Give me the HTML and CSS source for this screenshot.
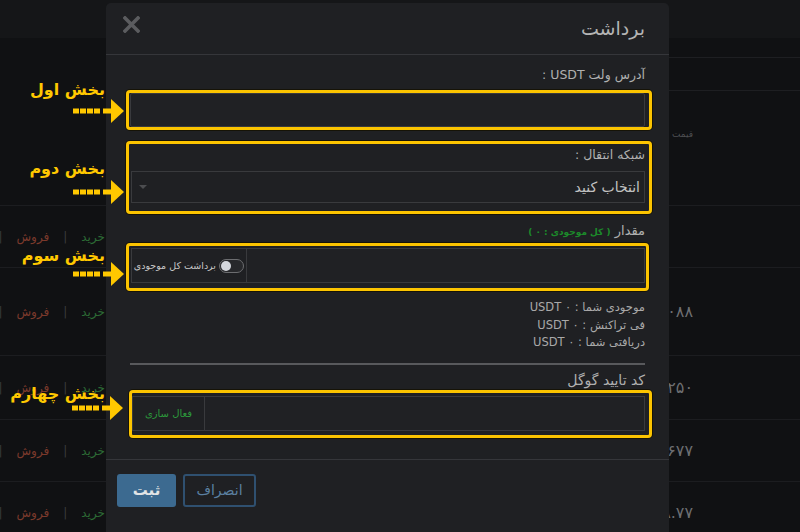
FILE: index.html
```html
<!DOCTYPE html>
<html lang="fa">
<head>
<meta charset="utf-8">
<title>برداشت</title>
<link rel="stylesheet" href="styles.css">
</head>
<body>
<div class="page">
  <div class="topbar"></div>
  <div class="upper">
    <div class="upper-right">
      <div class="ur-gap"></div>
      <div class="ur-row"></div>
      <div class="ur-row ur-tall"><span class="price-label">قیمت ·</span></div>
    </div>
  </div>
  <div class="row r1">
    <div class="trade"><span class="buy">خرید</span><span class="sep">|</span><span class="sell">فروش</span><span class="sep">|</span></div>
    <div></div>
    <div class="num"></div>
  </div>
  <div class="row r2">
    <div class="trade"><span class="buy">خرید</span><span class="sep">|</span><span class="sell">فروش</span><span class="sep">|</span></div>
    <div></div>
    <div class="num">۱۳,۰۸۸</div>
  </div>
  <div class="row r3">
    <div class="trade"><span class="buy">خرید</span><span class="sep">|</span><span class="sell">فروش</span><span class="sep">|</span></div>
    <div></div>
    <div class="num">۱۲,۲۵۰</div>
  </div>
  <div class="row r4">
    <div class="trade"><span class="buy">خرید</span><span class="sep">|</span><span class="sell">فروش</span><span class="sep">|</span></div>
    <div></div>
    <div class="num">۴,۶۷۷</div>
  </div>
  <div class="row r5">
    <div class="trade"><span class="buy">خرید</span><span class="sep">|</span><span class="sell">فروش</span><span class="sep">|</span></div>
    <div></div>
    <div class="num">۱۸.۷۷</div>
  </div>
</div>

<div class="modal" dir="rtl">
  <div class="modal-header">
    <h2 class="modal-title">برداشت</h2>
    <button class="close" aria-label="close">
      <svg width="17" height="17" viewBox="0 0 17 17"><path d="M2 2L15 15M15 2L2 15" stroke="#5b5c5f" stroke-width="3.6" stroke-linecap="square"/></svg>
    </button>
  </div>
  <div class="modal-body">
    <div class="label">آدرس ولت USDT :</div>
    <div class="mark mark-1">
      <div class="callout callout-1"><span class="callout-text" dir="rtl">بخش اول</span><svg class="arrow" width="51" height="24" viewBox="0 0 51 24"><rect x="0" y="9.5" width="6" height="5"/><rect x="7" y="9.5" width="6" height="5"/><rect x="14" y="9.5" width="6" height="5"/><rect x="21" y="9.5" width="6" height="5"/><rect x="30" y="9.5" width="10" height="5"/><polygon points="38,0 51,12 38,24"/></svg></div>
      <div class="input"></div>
    </div>

    <div class="mark mark-2">
      <div class="callout callout-2"><span class="callout-text" dir="rtl">بخش دوم</span><svg class="arrow" width="51" height="24" viewBox="0 0 51 24"><rect x="0" y="9.5" width="6" height="5"/><rect x="7" y="9.5" width="6" height="5"/><rect x="14" y="9.5" width="6" height="5"/><rect x="21" y="9.5" width="6" height="5"/><rect x="30" y="9.5" width="10" height="5"/><polygon points="38,0 51,12 38,24"/></svg></div>
      <div class="label">شبکه انتقال :</div>
      <div class="select">
        <span class="select-text">انتخاب کنید</span>
        <span class="caret"></span>
      </div>
    </div>

    <div class="label label-amount">مقدار <span class="total">( کل موجودی : ۰ )</span></div>
    <div class="mark mark-3">
      <div class="callout callout-3"><span class="callout-text" dir="rtl">بخش سوم</span><svg class="arrow" width="51" height="24" viewBox="0 0 51 24"><rect x="0" y="9.5" width="6" height="5"/><rect x="7" y="9.5" width="6" height="5"/><rect x="14" y="9.5" width="6" height="5"/><rect x="21" y="9.5" width="6" height="5"/><rect x="30" y="9.5" width="10" height="5"/><polygon points="38,0 51,12 38,24"/></svg></div>
      <div class="group">
        <div class="group-input"></div>
        <div class="addon addon-all">
          <span class="toggle"><span class="knob"></span></span>
          <span class="addon-text">برداشت کل موجودی</span>
        </div>
      </div>
    </div>

    <div class="info">
      <div>موجودی شما : ۰ USDT</div>
      <div>فی تراکنش : ۰ USDT</div>
      <div>دریافتی شما : ۰ USDT</div>
    </div>
    <div class="divider"></div>

    <div class="label label-google">کد تایید گوگل</div>
    <div class="mark mark-4">
      <div class="callout callout-4"><span class="callout-text" dir="rtl">بخش چهارم</span><svg class="arrow" width="51" height="24" viewBox="0 0 51 24"><rect x="0" y="9.5" width="6" height="5"/><rect x="7" y="9.5" width="6" height="5"/><rect x="14" y="9.5" width="6" height="5"/><rect x="21" y="9.5" width="6" height="5"/><rect x="30" y="9.5" width="10" height="5"/><polygon points="38,0 51,12 38,24"/></svg></div>
      <div class="group">
        <div class="group-input"></div>
        <div class="addon addon-activate">فعال سازی</div>
      </div>
    </div>
  </div>
  <div class="modal-footer">
    <button class="btn btn-cancel">انصراف</button>
    <button class="btn btn-submit">ثبت</button>
  </div>
</div>
</body>
</html>
```
FILE: styles.css
```css
* { box-sizing: border-box; margin: 0; padding: 0; }
html, body { width: 800px; height: 532px; overflow: hidden; }
body {
  background: #0f1012;
  font-family: "DejaVu Sans", sans-serif;
  position: relative;
}

/* background page */
.page { display: flex; flex-direction: column; height: 532px; }
.topbar { height: 38px; flex: none; background: #151618; }
.upper { height: 167px; flex: none; display: flex; justify-content: flex-end; background: #101113; }
.upper-right { width: 131px; display: flex; flex-direction: column; }
.ur-gap { height: 19px; }
.ur-row { height: 33px; border-top: 1px solid #1e1f22; }
.ur-tall { height: 115px; padding-top: 31px; direction: rtl; padding-right: 107px; white-space: nowrap; }
.price-label { font-size: 9px; color: #4e4f52; }

.row {
  flex: none;
  display: grid;
  grid-template-columns: 106px 1fr 131px;
  align-items: center;
  border-top: 1px solid #1c1d20;
  background: #101113;
}
.r1 { height: 62px; }
.r2 { height: 88px; }
.r3 { height: 64px; }
.r4 { height: 62px; }
.r5 { height: 62px; }
.trade {
  direction: rtl;
  display: flex;
  align-items: center;
  gap: 14px;
  padding-right: 1px;
  font-size: 12px;
  white-space: nowrap;
}
.buy { color: #2c6b35; }
.sell { color: #7c3a2c; }
.sep { color: #3a3b3d; font-size: 12px; }
.num {
  direction: rtl;
  padding-right: 107px;
  white-space: nowrap;
  font-size: 16px;
  color: #6e6f72;
}

/* modal */
.modal {
  position: absolute;
  left: 106px;
  top: 3px;
  width: 563px;
  height: 545px;
  background: #1f2023;
  border-radius: 5px;
  color: #b0b0b0;
}
.modal-header {
  height: 52px;
  border-bottom: 1px solid #35363a;
  display: flex;
  justify-content: space-between;
  align-items: flex-start;
  padding: 0 24px 0 17px;
}
.modal-title {
  font-size: 19px;
  font-weight: normal;
  color: #b4b4b4;
  line-height: 24px;
  margin-top: 13px;
}
.close {
  background: none;
  border: 0;
  margin-top: 13px;
  width: 17px;
  height: 17px;
  display: block;
}
.close svg { display: block; }

.modal-body { padding: 11px 24px 21px 24px; }
.label { font-size: 12.5px; line-height: 18px; color: #b0b0b0; }
.label-amount { margin-top: 8px; font-size: 13px; }
.total { color: #1c8a2a; font-size: 9px; font-weight: bold; }
.label-google { margin-top: 6px; font-size: 14px; }

.mark {
  position: relative;
  border: 3px solid #fcc400;
  border-radius: 4px;
  box-shadow: 0 0 0 1px rgba(20, 16, 0, .8);
}
.mark-1 { margin: 6px -7px 0 -4px; padding: 0 4px 0 1px; }
.mark-2 { margin: 11px -7px 0 -4px; padding: 2px 4px 8px 2px; }
.mark-3 { margin: 2px -4px 0 -4px; padding: 2px 1px 5px 2px; }
.mark-4 { margin: 1px -7px 0 -1px; padding: 3px 4px 4px 0; }

.input {
  height: 34px;
  background: #202124;
  border: 1px solid #393a3d;
  border-radius: 2px;
}
.select {
  margin-top: 7px;
  height: 32px;
  background: #1f2023;
  border: 1px solid #393a3d;
  display: flex;
  align-items: center;
  justify-content: space-between;
  padding: 0 4px 0 7px;
}
.select-text { font-size: 14px; color: #c2c2c2; }
.caret {
  width: 0; height: 0;
  border-left: 4px solid transparent;
  border-right: 4px solid transparent;
  border-top: 4px solid #4c4d50;
}

.group {
  height: 35px;
  display: flex;
  border: 1px solid #393a3d;
  background: #202124;
}
.group-input { flex: 1; }
.addon {
  flex: none;
  border-right: 1px solid #393a3d;
  display: flex;
  align-items: center;
  background: #1f2023;
}
.addon-all { width: 115px; padding-right: 2px; gap: 3px; }
.toggle {
  width: 25px;
  height: 14px;
  border: 1px solid #6c6d70;
  border-radius: 7px;
  background: #27282b;
  display: flex;
  justify-content: flex-end;
  align-items: center;
  padding: 0 1px;
  flex: none;
}
.knob { width: 10px; height: 10px; border-radius: 50%; background: #d4d7dd; }
.addon-text { font-size: 9.5px; color: #c8c8c8; white-space: nowrap; }
.addon-activate { width: 72px; justify-content: center; font-size: 10px; color: #2c9a3c; }

.info { margin-top: 8px; font-size: 11.5px; line-height: 17.5px; color: #a9a9a9; }
.divider { margin-top: 11px; height: 2px; background: #58595c; }

/* annotations */
.callout {
  position: absolute;
  right: calc(100% + 5px);
  direction: ltr;
  display: flex;
  flex-direction: column;
  align-items: flex-end;
  pointer-events: none;
}
.callout-text {
  font-size: 16px;
  line-height: 20px;
  font-weight: bold;
  color: #ffc800;
  margin-right: 19px;
  white-space: nowrap;
}
.arrow { display: block; fill: #ffc800; }
.callout-1 { top: -13px; }
.callout-1 .arrow { margin-top: -1px; }
.callout-2 { top: 15px; }
.callout-2 .arrow { margin-top: 1px; }
.callout-3 { top: 0; }
.callout-3 .arrow { margin-top: -4px; }
.callout-4 { top: -9px; right: calc(100% + 9px); }
.callout-4 .callout-text { margin-right: 18px; }
.callout-4 .arrow { margin-top: -8px; }

.modal-footer {
  border-top: 1px solid #35363a;
  padding: 14px 11px;
  display: flex;
  justify-content: flex-end;
  gap: 7px;
}
.btn {
  height: 33px;
  border-radius: 3px;
  font-family: "DejaVu Sans", sans-serif;
  font-size: 14px;
}
.btn-submit {
  width: 59px;
  background: #3c6a90;
  border: 0;
  color: #e2e4e6;
  font-weight: bold;
  font-size: 15px;
}
.btn-cancel {
  width: 73px;
  background: transparent;
  border: 2px solid #2f5070;
  color: #5b80a2;
}
```
